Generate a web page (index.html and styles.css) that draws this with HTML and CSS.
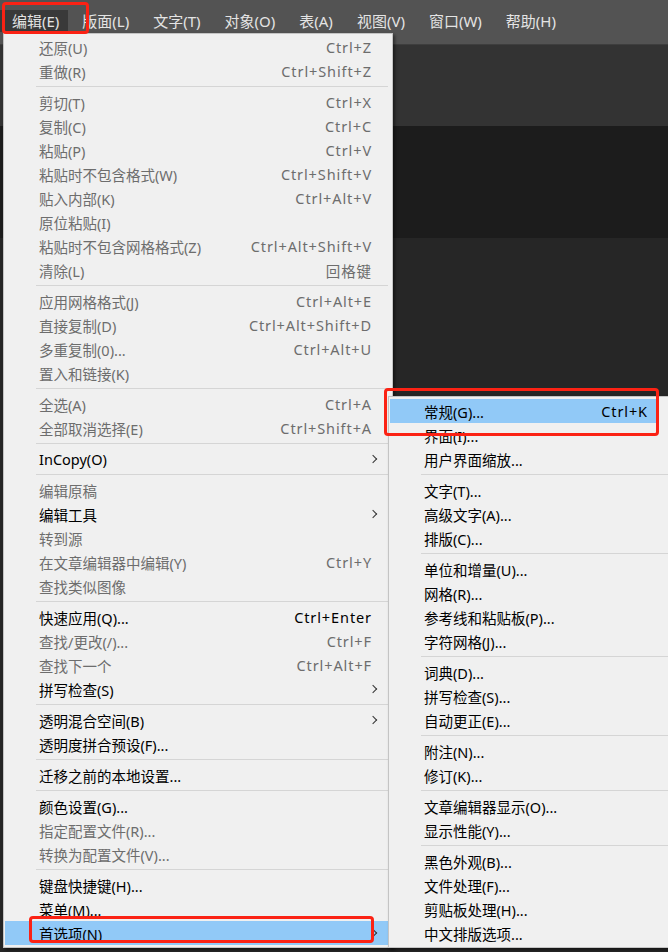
FILE: index.html
```html
<!DOCTYPE html>
<html lang="zh-CN">
<head>
  <meta charset="UTF-8" />
  <meta name="viewport" content="width=device-width, initial-scale=1.0"/>
  <title>编辑菜单</title>
  <link rel="stylesheet" href="styles.css">
</head>
<body>

  <div class="app">
    <nav class="menubar">
      <span class="menubar-item active">编辑(E)</span>
      <span class="menubar-item">版面(L)</span>
      <span class="menubar-item">文字(T)</span>
      <span class="menubar-item">对象(O)</span>
      <span class="menubar-item">表(A)</span>
      <span class="menubar-item">视图(V)</span>
      <span class="menubar-item">窗口(W)</span>
      <span class="menubar-item">帮助(H)</span>
    </nav>

    <div class="workspace">
      <div class="band band--control"></div>
      <div class="band band--tabs"></div>
      <div class="band band--canvas"></div>
    </div>

    <!-- 编辑 menu -->
    <div class="menu menu--edit">
      <div class="item off"><span>还原(U)</span><span class="key">Ctrl+Z</span></div>
      <div class="item off"><span>重做(R)</span><span class="key">Ctrl+Shift+Z</span></div>
      <div class="sep"></div>
      <div class="item off"><span>剪切(T)</span><span class="key">Ctrl+X</span></div>
      <div class="item off"><span>复制(C)</span><span class="key">Ctrl+C</span></div>
      <div class="item off"><span>粘贴(P)</span><span class="key">Ctrl+V</span></div>
      <div class="item off"><span>粘贴时不包含格式(W)</span><span class="key">Ctrl+Shift+V</span></div>
      <div class="item off"><span>贴入内部(K)</span><span class="key">Ctrl+Alt+V</span></div>
      <div class="item off"><span>原位粘贴(I)</span></div>
      <div class="item off"><span>粘贴时不包含网格格式(Z)</span><span class="key">Ctrl+Alt+Shift+V</span></div>
      <div class="item off"><span>清除(L)</span><span class="key">回格键</span></div>
      <div class="sep"></div>
      <div class="item off"><span>应用网格格式(J)</span><span class="key">Ctrl+Alt+E</span></div>
      <div class="item off"><span>直接复制(D)</span><span class="key">Ctrl+Alt+Shift+D</span></div>
      <div class="item off"><span>多重复制(0)...</span><span class="key">Ctrl+Alt+U</span></div>
      <div class="item off"><span>置入和链接(K)</span></div>
      <div class="sep"></div>
      <div class="item off"><span>全选(A)</span><span class="key">Ctrl+A</span></div>
      <div class="item off"><span>全部取消选择(E)</span><span class="key">Ctrl+Shift+A</span></div>
      <div class="sep"></div>
      <div class="item has-sub"><span>InCopy(O)</span></div>
      <div class="sep"></div>
      <div class="item off"><span>编辑原稿</span></div>
      <div class="item has-sub"><span>编辑工具</span></div>
      <div class="item off"><span>转到源</span></div>
      <div class="item off"><span>在文章编辑器中编辑(Y)</span><span class="key">Ctrl+Y</span></div>
      <div class="item off"><span>查找类似图像</span></div>
      <div class="sep"></div>
      <div class="item"><span>快速应用(Q)...</span><span class="key">Ctrl+Enter</span></div>
      <div class="item off"><span>查找/更改(/)...</span><span class="key">Ctrl+F</span></div>
      <div class="item off"><span>查找下一个</span><span class="key">Ctrl+Alt+F</span></div>
      <div class="item has-sub"><span>拼写检查(S)</span></div>
      <div class="sep"></div>
      <div class="item has-sub"><span>透明混合空间(B)</span></div>
      <div class="item"><span>透明度拼合预设(F)...</span></div>
      <div class="sep"></div>
      <div class="item"><span>迁移之前的本地设置...</span></div>
      <div class="sep"></div>
      <div class="item"><span>颜色设置(G)...</span></div>
      <div class="item off"><span>指定配置文件(R)...</span></div>
      <div class="item off"><span>转换为配置文件(V)...</span></div>
      <div class="sep"></div>
      <div class="item"><span>键盘快捷键(H)...</span></div>
      <div class="item"><span>菜单(M)...</span></div>
      <div class="item has-sub selected"><span>首选项(N)</span></div>
    </div>

    <!-- 首选项 submenu -->
    <div class="menu menu--prefs">
      <div class="item selected"><span>常规(G)...</span><span class="key">Ctrl+K</span></div>
      <div class="item"><span>界面(I)...</span></div>
      <div class="item"><span>用户界面缩放...</span></div>
      <div class="sep"></div>
      <div class="item"><span>文字(T)...</span></div>
      <div class="item"><span>高级文字(A)...</span></div>
      <div class="item"><span>排版(C)...</span></div>
      <div class="sep"></div>
      <div class="item"><span>单位和增量(U)...</span></div>
      <div class="item"><span>网格(R)...</span></div>
      <div class="item"><span>参考线和粘贴板(P)...</span></div>
      <div class="item"><span>字符网格(J)...</span></div>
      <div class="sep"></div>
      <div class="item"><span>词典(D)...</span></div>
      <div class="item"><span>拼写检查(S)...</span></div>
      <div class="item"><span>自动更正(E)...</span></div>
      <div class="sep"></div>
      <div class="item"><span>附注(N)...</span></div>
      <div class="item"><span>修订(K)...</span></div>
      <div class="sep"></div>
      <div class="item"><span>文章编辑器显示(O)...</span></div>
      <div class="item"><span>显示性能(Y)...</span></div>
      <div class="sep"></div>
      <div class="item"><span>黑色外观(B)...</span></div>
      <div class="item"><span>文件处理(F)...</span></div>
      <div class="item"><span>剪贴板处理(H)...</span></div>
      <div class="item"><span>中文排版选项...</span></div>
    </div>

    <!-- red annotation boxes -->
    <div class="mark mark--menubar"></div>
    <div class="mark mark--prefs"></div>
    <div class="mark mark--general"></div>
  </div>

</body>
</html>
```

FILE: styles.css
```css
* {
  box-sizing: border-box;
}

body {
  margin: 0;
  padding: 0;
  background: #262626;
  font-family: "Noto Sans", "Noto Sans CJK SC", sans-serif;
  font-size: 14.5px;
  overflow: hidden;
}

.app {
  position: relative;
  width: 668px;
  height: 952px;
  overflow: hidden;
}

.menubar {
  display: flex;
  height: 45px;
  padding: 10px 0 0 0;
  background: #535353;
  border-bottom: 1px solid #3e3e3e;
}

.menubar-item {
  height: 22px;
  line-height: 22px;
  padding: 0 12px;
  color: #e4e4e4;
  font-size: 15px;
  white-space: nowrap;
}

.menubar-item.active {
  background: #393939;
  padding-right: 9px;
  margin-right: 2px;
}

.workspace {
  display: flex;
  flex-direction: column;
  height: 907px;
}

.band--control {
  height: 81px;
  background: #333333;
}

.band--tabs {
  height: 112px;
  background: #1c1c1c;
}

.band--canvas {
  flex: 1;
  background: #262626;
}

.menu {
  position: absolute;
  display: flex;
  flex-direction: column;
  background: #f0f0f0;
  border: 1px solid #c4c4c4;
  box-shadow: 2px 2px 3px rgba(0, 0, 0, 0.45);
}

.menu--edit {
  top: 33px;
  left: 3px;
  width: 390px;
  padding: 1px 4px 2px 1px;
}

.menu--prefs {
  top: 396px;
  left: 388px;
  width: 300px;
  padding: 2px 30px 2px 1px;
}

.item {
  position: relative;
  display: flex;
  justify-content: space-between;
  align-items: center;
  height: 24px;
  padding: 0 17px 0 34px;
  color: #000;
  white-space: nowrap;
}

.menu--prefs .item {
  padding: 0 10px 0 34px;
}

.key {
  letter-spacing: 0.9px;
  margin-right: -1px;
}

.item.off {
  color: #6d6d6d;
}

.item.selected {
  background: #91c9f7;
}

.has-sub::after {
  content: "";
  position: absolute;
  right: 12px;
  top: 9px;
  width: 5px;
  height: 5px;
  border-top: 1px solid #333;
  border-right: 1px solid #333;
  transform: rotate(45deg);
}

.sep {
  height: 7px;
  margin-left: 31px;
  display: flex;
  align-items: center;
}

.sep::before {
  content: "";
  flex: 1;
  height: 1px;
  background: #d5d5d5;
}

.menu--prefs .sep {
  margin-right: -30px;
}

.mark {
  position: absolute;
  border: 3px solid #fb2214;
  border-radius: 4px;
}

.mark--menubar {
  top: 2px;
  left: 2px;
  width: 87px;
  height: 32px;
}

.mark--prefs {
  top: 916px;
  left: 29px;
  width: 345px;
  height: 27px;
}

.mark--general {
  top: 388px;
  left: 384px;
  width: 275px;
  height: 48px;
}
```
